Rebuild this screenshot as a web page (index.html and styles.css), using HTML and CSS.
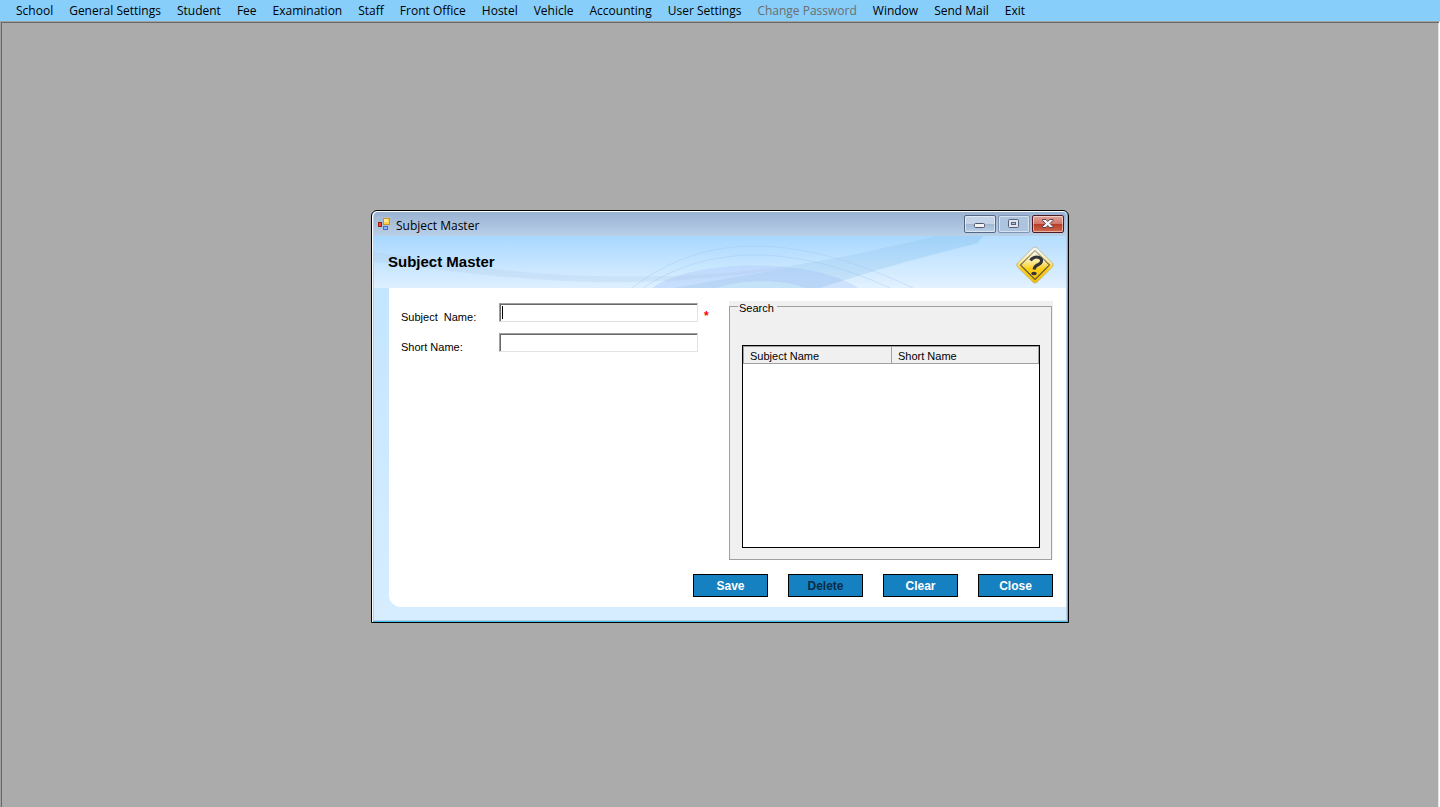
FILE: index.html
```
<!DOCTYPE html>
<html lang="en">
<head>
  <meta charset="UTF-8" />
  <meta name="viewport" content="width=device-width, initial-scale=1.0"/>
  <title>Subject Master</title>
  <link rel="stylesheet" href="styles.css">
</head>
<body>
  <nav class="menubar">
    <a href="#">School</a>
    <a href="#">General Settings</a>
    <a href="#">Student</a>
    <a href="#">Fee</a>
    <a href="#">Examination</a>
    <a href="#">Staff</a>
    <a href="#">Front Office</a>
    <a href="#">Hostel</a>
    <a href="#">Vehicle</a>
    <a href="#">Accounting</a>
    <a href="#">User Settings</a>
    <a href="#" class="disabled" aria-disabled="true">Change Password</a>
    <a href="#">Window</a>
    <a href="#">Send Mail</a>
    <a href="#">Exit</a>
  </nav>

  <main class="workspace">
    <section class="window">
      <div class="titlebar">
        <svg class="app-icon" width="14" height="14" viewBox="0 0 14 14">
          <rect x="0.5" y="0.5" width="13" height="13" fill="none" stroke="#c3c3c8" stroke-opacity="0.6"/>
          <rect x="1.5" y="5.500" width="3" height="4" fill="#e0503c" stroke="#a31c10"/>
          <rect x="6.5" y="1.500" width="6" height="6" fill="#fbd04a" stroke="#c8952a"/>
          <rect x="7" y="2" width="4" height="3" fill="#ffeb9c"/>
          <rect x="6.5" y="9.500" width="4" height="3" fill="#8fb6f5" stroke="#3f6fd0"/>
        </svg>
        <span class="caption">Subject Master</span>
        <div class="window-buttons">
          <button type="button" class="win-btn" aria-label="Minimize">
            <svg width="30" height="16" viewBox="0 0 30 16">
              <rect x="9.5" y="7.500" width="10" height="4" rx="1" fill="#f4f4f4" stroke="#535666"/>
            </svg>
          </button>
          <button type="button" class="win-btn win-max" aria-label="Maximize">
            <svg width="30" height="16" viewBox="0 0 30 16">
              <rect x="9.5" y="3.500" width="10" height="8" rx="1" fill="#dce6f2" stroke="#5b6076"/>
              <rect x="12.5" y="6.500" width="4" height="2" fill="#aec4dd" stroke="#5b6076"/>
            </svg>
          </button>
          <button type="button" class="win-btn win-close" aria-label="Close window">
            <svg width="30" height="16" viewBox="0 0 30 16">
              <path d="M9.500 3.500H13L14.750 5.500L16.500 3.500H20V4.500L17 7.500L20 10.500V11.500H16.500L14.750 9.500L13 11.500H9.500V10.500L12.500 7.500L9.500 4.500Z" fill="#f6f3f4" stroke="#5a4454"/>
            </svg>
          </button>
        </div>
      </div>

      <header class="banner">
        <svg class="swoosh" viewBox="0 0 692 52" preserveAspectRatio="none">
          <path d="M278 52C320 22 440 22 484 52Z" fill="#b4cdfb" fill-opacity="0.5"/>
          <path d="M343 52C366 43 410 43 431 52Z" fill="#d6efff" fill-opacity="0.9"/>
          <path d="M433 27C480 20 520 9 563 0H609L604 7C560 18 500 34 446 52H300C340 44 400 36 433 27Z" fill="#82bbe2" fill-opacity="0.2"/>
          <path d="M0 16C60 24 120 37 220 40C300 42 370 38 433 27C390 38 300 48 220 46C130 44 60 32 0 26Z" fill="#9fbfd8" fill-opacity="0.18"/>
          <path d="M446 52C500 34 560 18 604 7L609 0H692V52Z" fill="#ffffff" fill-opacity="0.14"/>
          <path d="M258 52C330 -4 420 -4 539 52" class="arc"/>
          <path d="M269 52C335 8 420 8 516 52" class="arc"/>
        </svg>
        <h1>Subject Master</h1>
        <svg class="help-icon" width="38" height="38" viewBox="0 0 38 38">
          <defs>
            <linearGradient id="sign" x1="0" y1="0" x2="0" y2="1">
              <stop offset="0.1" stop-color="#f6f6f0"/>
              <stop offset="0.4" stop-color="#fbeaa0"/>
              <stop offset="0.6" stop-color="#fccf1c"/>
              <stop offset="1" stop-color="#f5bd00"/>
            </linearGradient>
            <linearGradient id="sign-line" x1="0" y1="0" x2="0" y2="1">
              <stop offset="0" stop-color="#b5b2a0"/>
              <stop offset="0.6" stop-color="#6b5f38"/>
            </linearGradient>
          </defs>
          <path d="M17 1.800Q19 0 21 1.800L36.500 17Q38 19 36.500 21L21 36.200Q19 38 17 36.200L1.500 21Q0 19 1.500 17Z" fill="url(#sign)" stroke="#b9b18a" stroke-width="0.800"/>
          <path d="M19 4.500L33.500 19L19 33.500L4.500 19Z" fill="none" stroke="url(#sign-line)" stroke-width="1.200" stroke-linejoin="round"/>
          <path d="M14.500 14.500C16 11.500 20 10.500 23 11.500C27 13 26 17 22.500 18.500C20 19.500 18.500 20.500 18 23.500" fill="none" stroke="#33343a" stroke-width="3"/>
          <ellipse cx="18" cy="27.500" rx="2.800" ry="1.700" fill="#33343a"/>
        </svg>
      </header>

      <form class="panel">
        <div class="columns">
          <div class="fields">
            <div class="field">
              <label for="subject-name">Subject&nbsp; Name:</label>
              <div class="input-wrap">
                <input type="text" id="subject-name" required>
                <span class="caret"></span>
              </div>
              <span class="required">*</span>
            </div>
            <div class="field">
              <label for="short-name">Short Name:</label>
              <div class="input-wrap">
                <input type="text" id="short-name">
              </div>
            </div>
          </div>

          <div class="search">
            <fieldset>
              <legend>Search</legend>
              <div class="list">
                <table>
                  <thead>
                    <tr>
                      <th>Subject Name</th>
                      <th>Short Name</th>
                    </tr>
                  </thead>
                  <tbody></tbody>
                </table>
              </div>
            </fieldset>
          </div>
        </div>

        <div class="actions">
          <button type="button">Save</button>
          <button type="button" disabled>Delete</button>
          <button type="button">Clear</button>
          <button type="button">Close</button>
        </div>
      </form>
    </section>
  </main>
</body>
</html>
```
FILE: styles.css
```
* { box-sizing: border-box; margin: 0; padding: 0; }

body {
  display: flex;
  flex-direction: column;
  min-height: 100vh;
  font-family: "Liberation Sans", Arial, sans-serif;
  font-size: 11px;
  color: #000;
  background-color: #ababab;
}

/* Menu */
.menubar {
  display: flex;
  gap: 16px;
  height: 21px;
  padding: 0 16px;
  background-color: #87cefa;
  font-family: "Open Sans", sans-serif;
  font-size: 12px;
  line-height: 21px;
  white-space: nowrap;
}

.menubar a {
  color: #000;
  text-decoration: none;
}

.menubar .disabled {
  color: #6d6d6d;
}

/* MDI area */
.workspace {
  flex: 1;
  display: flex;
  align-items: center;
  justify-content: center;
  padding-top: 4px;
  border: 1px solid #a0a0a0;
  border-right-color: #fff;
  border-bottom: none;
  box-shadow: inset 1px 1px #696969, inset -1px 0 #e3e3e3;
}

.window {
  width: 698px;
  padding: 1px 2px 2px;
  border: 1px solid #000;
  border-radius: 6px 6px 0 0;
  background: linear-gradient(#c0e4ff, #d6edff);
  box-shadow: inset 1px 1px #fff, inset -1px -1px #3fbfe6, inset 2px 0 #b9cfea, inset -2px -2px #b9cfea;
}

.titlebar {
  display: flex;
  align-items: center;
  height: 24px;
  padding: 0 2px 0 3px;
  border-radius: 4px 4px 0 0;
  background: linear-gradient(#99b2d1, #b9d0e9);
}

.caption {
  flex: 1;
  margin-left: 5px;
  font-family: "Open Sans", sans-serif;
  font-size: 12px;
  line-height: 21px;
  padding-top: 3px;
}

.window-buttons {
  display: flex;
  gap: 2px;
}

.win-btn {
  width: 32px;
  height: 18px;
  border: 1px solid #56677f;
  border-radius: 2px;
  background: linear-gradient(#c3d4e8 50%, #a0b8d4 50%, #b9d0e8);
  box-shadow: inset 0 0 0 1px rgba(255, 255, 255, 0.5);
}

.win-btn svg {
  display: block;
}

.win-max {
  border-color: #8095b3;
  background: #adc4df;
}

.win-close {
  border-color: #4d1a23;
  background: linear-gradient(#dfa398, #cf7466 50%, #b63a26 50%, #cf6b50);
}

/* Banner */
.banner {
  position: relative;
  display: flex;
  align-items: center;
  justify-content: space-between;
  height: 52px;
  padding: 0 12px 0 14px;
  background: linear-gradient(#a8d8ff, #def0ff);
}

.swoosh {
  position: absolute;
  inset: 0;
  width: 100%;
  height: 100%;
}

.arc {
  fill: none;
  stroke: #9cc3ef;
  stroke-opacity: 0.35;
}

.banner h1 {
  position: relative;
  font-size: 15px;
  line-height: 52px;
}

.help-icon {
  position: relative;
  margin-top: 6px;
}

/* Form */
.panel {
  margin: 0 0 13px 15px;
  padding: 13px 13px 10px 12px;
  border-bottom-left-radius: 12px;
  background-color: #fff;
}

.columns {
  display: flex;
  justify-content: space-between;
}

.fields {
  display: flex;
  flex-direction: column;
  gap: 11px;
  padding-top: 2px;
}

.field {
  display: flex;
  align-items: flex-end;
}

.field label {
  width: 98px;
  line-height: 10px;
}

.input-wrap {
  position: relative;
}

.field input {
  display: block;
  width: 199px;
  height: 19px;
  padding: 2px 3px;
  border: 1px solid #a0a0a0;
  border-right-color: #e3e3e3;
  border-bottom-color: #e3e3e3;
  box-shadow: inset 1px 1px #696969;
  font: inherit;
  outline: none;
}

.caret {
  position: absolute;
  top: 3px;
  left: 3px;
  width: 1px;
  height: 13px;
  background-color: #000;
}

.required {
  margin-left: 6px;
  color: #f00;
  font-size: 12px;
  font-weight: bold;
  line-height: 12px;
}

.search {
  width: 324px;
  padding-right: 1px;
  background-color: #f0f0f0;
}

.search fieldset {
  padding: 0 11px 11px 12px;
  border: 1px solid #a0a0a0;
}

.search legend {
  height: 11px;
  margin-left: -4px;
  padding: 0 3px 0 1px;
  line-height: 15px;
}

.list {
  height: 203px;
  margin-top: 33px;
  border: 1px solid #000;
  background-color: #fff;
}

.list table {
  width: 100%;
  border-spacing: 0;
  border: 1px solid #a0a0a0;
  background-color: #f0f0f0;
}

.list th {
  width: 50%;
  height: 16px;
  padding: 2px 6px 0;
  font-weight: normal;
  line-height: 14px;
  text-align: left;
}

.list th + th {
  border-left: 1px solid #a0a0a0;
}

.actions {
  display: flex;
  justify-content: flex-end;
  gap: 20px;
  margin-top: 14px;
}

.actions button {
  width: 75px;
  height: 23px;
  border: 1px solid #000;
  background-color: #1681c0;
  color: #fff;
  font-family: inherit;
  font-size: 12px;
  font-weight: bold;
}

.actions button:disabled {
  color: #0b2c48;
}
```
